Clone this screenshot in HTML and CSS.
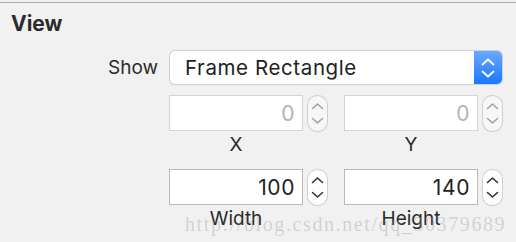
FILE: index.html
```html
<!DOCTYPE html>
<html lang="en">

<head>
  <meta charset="UTF-8" />
  <title>View Inspector</title>
  <link rel="stylesheet" href="styles.css">
</head>

<body>
  <div class="panel">
    <h3 class="section-title">View</h3>

    <div class="show-row">
      <label class="row-label">Show</label>
      <div class="popup">
        <span class="popup-text">Frame Rectangle</span>
        <span class="popup-arrows">
          <svg width="16" height="24" viewBox="0 0 16 24">
            <path d="M2.5 8.5 L8 3.5 L13.5 8.5 M2.5 15.5 L8 20.5 L13.5 15.5" fill="none" stroke="#fff" stroke-width="1.8" stroke-linecap="round" stroke-linejoin="round" />
          </svg>
        </span>
      </div>
    </div>

    <div class="coord-row">
      <div class="coord">
        <div class="coord-input">
          <div class="field disabled">0</div>
          <div class="stepper disabled">
            <svg width="19" height="35" viewBox="0 0 19 35">
              <path d="M4.5 12.5 L9.5 8 L14.5 12.5 M4.5 22.5 L9.5 27 L14.5 22.5" fill="none" stroke="#a0a0a0" stroke-width="1.5" stroke-linecap="round" stroke-linejoin="round" />
            </svg>
          </div>
        </div>
        <div class="coord-label">X</div>
      </div>
      <div class="coord">
        <div class="coord-input">
          <div class="field disabled">0</div>
          <div class="stepper disabled">
            <svg width="19" height="35" viewBox="0 0 19 35">
              <path d="M4.5 12.5 L9.5 8 L14.5 12.5 M4.5 22.5 L9.5 27 L14.5 22.5" fill="none" stroke="#a0a0a0" stroke-width="1.5" stroke-linecap="round" stroke-linejoin="round" />
            </svg>
          </div>
        </div>
        <div class="coord-label">Y</div>
      </div>
    </div>

    <div class="coord-row">
      <div class="coord">
        <div class="coord-input">
          <div class="field">100</div>
          <div class="stepper">
            <svg width="19" height="35" viewBox="0 0 19 35">
              <path d="M4.5 12.5 L9.5 8 L14.5 12.5 M4.5 22.5 L9.5 27 L14.5 22.5" fill="none" stroke="#333" stroke-width="1.6" stroke-linecap="round" stroke-linejoin="round" />
            </svg>
          </div>
        </div>
        <div class="coord-label">Width</div>
      </div>
      <div class="coord">
        <div class="coord-input">
          <div class="field">140</div>
          <div class="stepper">
            <svg width="19" height="35" viewBox="0 0 19 35">
              <path d="M4.5 12.5 L9.5 8 L14.5 12.5 M4.5 22.5 L9.5 27 L14.5 22.5" fill="none" stroke="#333" stroke-width="1.6" stroke-linecap="round" stroke-linejoin="round" />
            </svg>
          </div>
        </div>
        <div class="coord-label">Height</div>
      </div>
    </div>

    <div class="watermark">http://blog.csdn.net/qq_30379689</div>
  </div>
</body>
</html>
```

FILE: styles.css
```css
* {
  box-sizing: border-box;
  font-family: 'Inter', 'Roboto', sans-serif;
}

body {
  margin: 0;
  background: #f1f1f1;
  width: 516px;
  height: 242px;
  overflow: hidden;
}

.panel {
  position: relative;
  margin-top: 2px;
  border-top: 1px solid #ababab;
  height: 239px;
}

.section-title {
  margin: 0;
  padding: 9px 0 0 11px;
  font-size: 21px;
  line-height: 24px;
  font-weight: bold;
  color: #2b2b2b;
}

.show-row {
  display: flex;
  align-items: center;
  margin-top: 15px;
}

.row-label {
  width: 158px;
  text-align: right;
  font-size: 19px;
  color: #2b2b2b;
  margin-right: 12px;
}

.popup {
  width: 332px;
  height: 33px;
  display: flex;
  background: #fff;
  border-radius: 5px;
  box-shadow: 0 0 0 1px #d0d0d0, 0 1px 1px rgba(0, 0, 0, 0.15);
  overflow: hidden;
}

.popup-text {
  flex: 1;
  padding-left: 15px;
  font-size: 20.5px;
  letter-spacing: 0.6px;
  line-height: 33px;
  color: #222;
}

.popup-arrows {
  width: 28px;
  display: flex;
  align-items: center;
  justify-content: center;
  background: linear-gradient(#6aa8fd, #1c78fb);
}

.coord-row {
  display: flex;
  gap: 17px;
  margin-left: 169px;
  margin-top: 11px;
}

.coord-row + .coord-row {
  margin-top: 12px;
}

.coord-input {
  display: flex;
  gap: 5px;
  align-items: center;
}

.field {
  width: 134px;
  height: 36px;
  background: #fff;
  border: 1px solid #b8b8b8;
  text-align: right;
  padding-right: 7px;
  font-size: 21px;
  letter-spacing: 0.6px;
  line-height: 35px;
  color: #222;
}

.field.disabled {
  border-color: #d4d4d4;
  color: #b4b4b4;
}

.stepper {
  width: 19px;
  height: 35px;
  background: #fff;
  border-radius: 9px;
  box-shadow: 0 0 0 1px #cfcfcf, 0 1px 1px rgba(0, 0, 0, 0.12);
  display: flex;
}

.stepper.disabled {
  background: #f7f7f7;
}

.coord-label {
  width: 134px;
  text-align: center;
  font-size: 19px;
  line-height: 24px;
  margin-top: 2px;
  color: #2b2b2b;
}

.watermark {
  position: absolute;
  left: 185px;
  top: 210px;
  font-family: 'Liberation Serif', serif;
  font-size: 20px;
  letter-spacing: 1.6px;
  color: rgba(150, 150, 150, 0.35);
  white-space: nowrap;
}
```
